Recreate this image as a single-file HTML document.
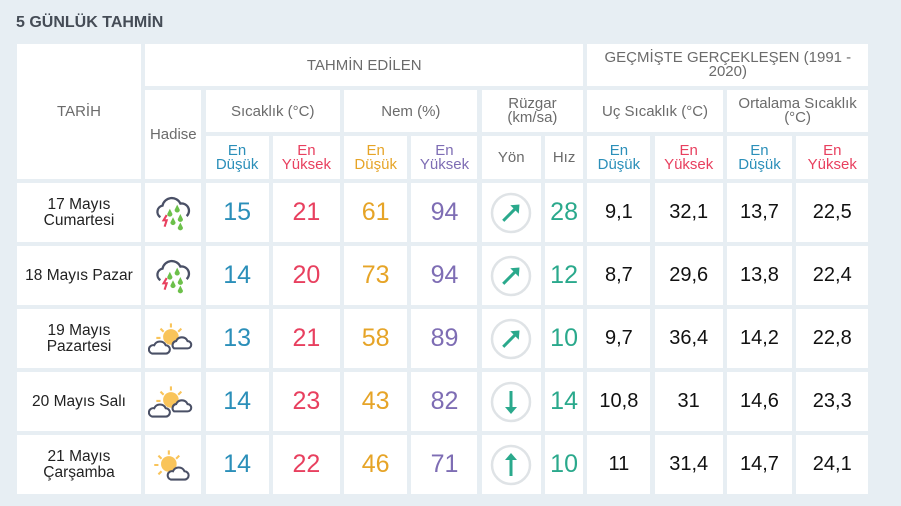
<!DOCTYPE html>
<html><head><meta charset="utf-8"><style>
body{margin:0;width:901px;height:506px;background:#e7eef3;font-family:"Liberation Sans",sans-serif;overflow:hidden;position:relative}
h1{position:absolute;left:16px;top:14px;margin:0;font-size:16px;font-weight:bold;color:#454c56}
.g{position:absolute;left:17px;top:44px;display:grid;grid-template-columns:124px 56px 63px 67px 63px 66px 59px 38px 63px 68px 65px 72px;grid-template-rows:42px 42px 43px 59px 59px 59px 59px 59px;gap:4px 4.3px}
.g>div{background:#fff;display:flex;align-items:center;justify-content:center;text-align:center;color:#6b6b6b;font-size:15px;line-height:15px}
.b{color:#2b8fb9!important}.r{color:#e8405f!important}.o{color:#e6a427!important}.p{color:#7e6db4!important}.t{color:#2aa98c!important}
.n{font-size:25px!important}.h{font-size:20px!important;color:#111!important}
.d{color:#222!important;font-size:15.5px!important;line-height:16px!important}
.sm{font-size:15px!important;line-height:14px!important}
</style></head><body>
<h1>5 GÜNLÜK TAHMİN</h1>
<div class="g">
<div style="grid-row:1/4">TARİH</div>
<div style="grid-column:2/9">TAHMİN EDİLEN</div>
<div style="grid-column:9/13" class="sm">GEÇMİŞTE GERÇEKLEŞEN (1991 -<br>2020)</div>
<div style="grid-row:2/4">Hadise</div>
<div style="grid-column:3/5">Sıcaklık (°C)</div>
<div style="grid-column:5/7">Nem (%)</div>
<div style="grid-column:7/9" class="sm">Rüzgar<br>(km/sa)</div>
<div style="grid-column:9/11">Uç Sıcaklık (°C)</div>
<div style="grid-column:11/13" class="sm">Ortalama Sıcaklık<br>(°C)</div>
<div class="b sm">En<br>Düşük</div><div class="r sm">En<br>Yüksek</div><div class="o sm">En<br>Düşük</div><div class="p sm">En<br>Yüksek</div><div>Yön</div><div>Hız</div><div class="b sm">En<br>Düşük</div><div class="r sm">En<br>Yüksek</div><div class="b sm">En<br>Düşük</div><div class="r sm">En<br>Yüksek</div>

<div class="d">17 Mayıs<br>Cumartesi</div>
<div><svg width="42" height="38" viewBox="0 0 40 36"><path d="M8 22a6 6 0 0 1 2-11a9 9 0 0 1 17-2a7 7 0 0 1 6 12" fill="none" stroke="#4a5066" stroke-width="2.2"/><path d="M14 20l-3 5h3l-2 6" fill="none" stroke="#e8405f" stroke-width="2"/><path d="M17 14l2.5 5a2.5 2.5 0 0 1-5 0zM24 10l2.5 5a2.5 2.5 0 0 1-5 0zM27 19l2.5 5a2.5 2.5 0 0 1-5 0zM20 22l2.5 5a2.5 2.5 0 0 1-5 0zM27 27l2.5 5a2.5 2.5 0 0 1-5 0z" fill="#6cc04a"/></svg></div>
<div class="b n">15</div><div class="r n">21</div><div class="o n">61</div><div class="p n">94</div>
<div><svg width="44" height="44" viewBox="0 0 44 44"><circle cx="22" cy="22" r="19" fill="none" stroke="#dfe3e6" stroke-width="2.5"/><g transform="rotate(45 22 22)"><path d="M22 33V14" stroke="#2aa98c" stroke-width="3"/><path d="M16 17l6-7 6 7z" fill="#2aa98c"/></g></svg></div>
<div class="t n">28</div><div class="h">9,1</div><div class="h">32,1</div><div class="h">13,7</div><div class="h">22,5</div>

<div class="d">18 Mayıs Pazar</div>
<div><svg width="42" height="38" viewBox="0 0 40 36"><path d="M8 22a6 6 0 0 1 2-11a9 9 0 0 1 17-2a7 7 0 0 1 6 12" fill="none" stroke="#4a5066" stroke-width="2.2"/><path d="M14 20l-3 5h3l-2 6" fill="none" stroke="#e8405f" stroke-width="2"/><path d="M17 14l2.5 5a2.5 2.5 0 0 1-5 0zM24 10l2.5 5a2.5 2.5 0 0 1-5 0zM27 19l2.5 5a2.5 2.5 0 0 1-5 0zM20 22l2.5 5a2.5 2.5 0 0 1-5 0zM27 27l2.5 5a2.5 2.5 0 0 1-5 0z" fill="#6cc04a"/></svg></div>
<div class="b n">14</div><div class="r n">20</div><div class="o n">73</div><div class="p n">94</div>
<div><svg width="44" height="44" viewBox="0 0 44 44"><circle cx="22" cy="22" r="19" fill="none" stroke="#dfe3e6" stroke-width="2.5"/><g transform="rotate(45 22 22)"><path d="M22 33V14" stroke="#2aa98c" stroke-width="3"/><path d="M16 17l6-7 6 7z" fill="#2aa98c"/></g></svg></div>
<div class="t n">12</div><div class="h">8,7</div><div class="h">29,6</div><div class="h">13,8</div><div class="h">22,4</div>

<div class="d">19 Mayıs<br>Pazartesi</div>
<div><svg width="50" height="38" viewBox="0 0 48 36"><circle cx="22" cy="16" r="7.5" fill="#f9c45a"/><path d="M22 3v4M12 8l3 3M32 8l-3 3M8 17h4" stroke="#f9c45a" stroke-width="2"/><path d="M4 32a4 4 0 0 1 2-8a6 6 0 0 1 11 0a4 4 0 0 1 0 8z" fill="#fff" stroke="#4a5066" stroke-width="2"/><path d="M25 27a4 4 0 0 1 2-7a6 6 0 0 1 11 0a3.5 3.5 0 0 1 0 7z" fill="#fff" stroke="#4a5066" stroke-width="2"/></svg></div>
<div class="b n">13</div><div class="r n">21</div><div class="o n">58</div><div class="p n">89</div>
<div><svg width="44" height="44" viewBox="0 0 44 44"><circle cx="22" cy="22" r="19" fill="none" stroke="#dfe3e6" stroke-width="2.5"/><g transform="rotate(45 22 22)"><path d="M22 33V14" stroke="#2aa98c" stroke-width="3"/><path d="M16 17l6-7 6 7z" fill="#2aa98c"/></g></svg></div>
<div class="t n">10</div><div class="h">9,7</div><div class="h">36,4</div><div class="h">14,2</div><div class="h">22,8</div>

<div class="d">20 Mayıs Salı</div>
<div><svg width="50" height="38" viewBox="0 0 48 36"><circle cx="22" cy="16" r="7.5" fill="#f9c45a"/><path d="M22 3v4M12 8l3 3M32 8l-3 3M8 17h4" stroke="#f9c45a" stroke-width="2"/><path d="M4 32a4 4 0 0 1 2-8a6 6 0 0 1 11 0a4 4 0 0 1 0 8z" fill="#fff" stroke="#4a5066" stroke-width="2"/><path d="M25 27a4 4 0 0 1 2-7a6 6 0 0 1 11 0a3.5 3.5 0 0 1 0 7z" fill="#fff" stroke="#4a5066" stroke-width="2"/></svg></div>
<div class="b n">14</div><div class="r n">23</div><div class="o n">43</div><div class="p n">82</div>
<div><svg width="44" height="44" viewBox="0 0 44 44"><circle cx="22" cy="22" r="19" fill="none" stroke="#dfe3e6" stroke-width="2.5"/><g transform="rotate(180 22 22)"><path d="M22 33V14" stroke="#2aa98c" stroke-width="3"/><path d="M16 17l6-7 6 7z" fill="#2aa98c"/></g></svg></div>
<div class="t n">14</div><div class="h">10,8</div><div class="h">31</div><div class="h">14,6</div><div class="h">23,3</div>

<div class="d">21 Mayıs<br>Çarşamba</div>
<div><svg width="50" height="38" viewBox="0 0 48 36"><circle cx="20" cy="17" r="7.5" fill="#f9c45a"/><path d="M20 4v4M10 9l3 3M30 9l-3 3M6 18h4M10 27l3-3" stroke="#f9c45a" stroke-width="2"/><path d="M22 32a4 4 0 0 1 2-8a6 6 0 0 1 11 0a4 4 0 0 1 0 8z" fill="#fff" stroke="#4a5066" stroke-width="2"/></svg></div>
<div class="b n">14</div><div class="r n">22</div><div class="o n">46</div><div class="p n">71</div>
<div><svg width="44" height="44" viewBox="0 0 44 44"><circle cx="22" cy="22" r="19" fill="none" stroke="#dfe3e6" stroke-width="2.5"/><path d="M22 33V14" stroke="#2aa98c" stroke-width="3"/><path d="M16 17l6-7 6 7z" fill="#2aa98c"/></svg></div>
<div class="t n">10</div><div class="h">11</div><div class="h">31,4</div><div class="h">14,7</div><div class="h">24,1</div>
</div>
</body></html>
